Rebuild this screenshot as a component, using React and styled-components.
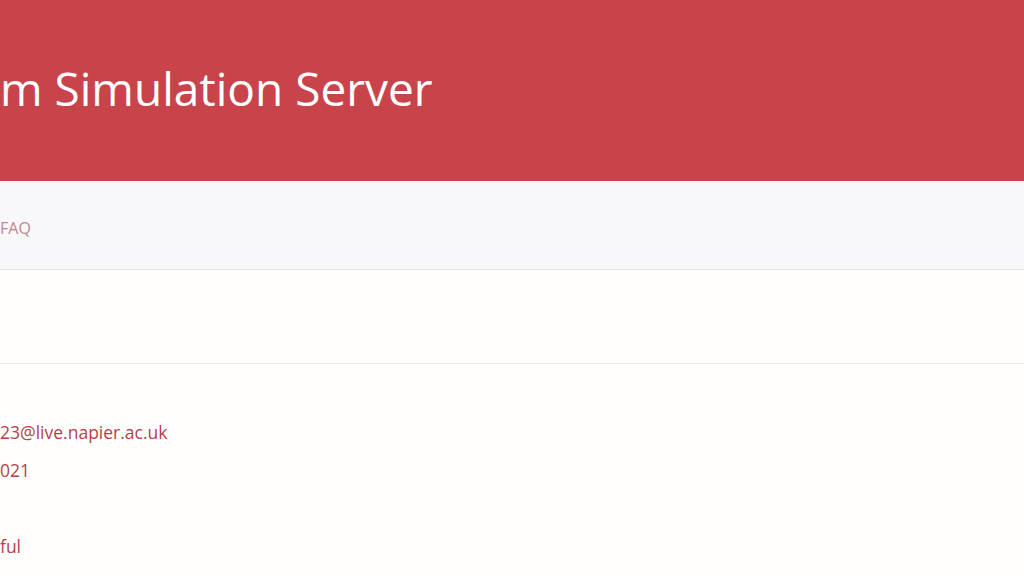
import React from 'react';
import styled, { createGlobalStyle } from 'styled-components';

const GlobalStyle = createGlobalStyle`
  html, body {
    margin: 0;
    padding: 0;
    background: #fffefd;
    overflow: hidden;
  }
  body {
    font-family: "Open Sans", "Noto Sans", sans-serif;
  }
`;

const Page = styled.div`
  width: 1024px;
  height: 576px;
  display: flex;
  flex-direction: column;
  background: #fffefd;
`;

const Header = styled.header`
  box-sizing: border-box;
  height: 181px;
  padding-top: 61px;
  background: #c9434b;
`;

const Title = styled.h1`
  margin: 0;
  font-size: 46px;
  line-height: 55px;
  font-weight: 400;
  color: #ffffff;
  white-space: nowrap;
`;

const Nav = styled.nav`
  box-sizing: border-box;
  height: 89px;
  padding-top: 35px;
  background: #f8f8fa;
  border-bottom: 1px solid #e6e1e1;
  display: flex;
  gap: 24px;
`;

const NavLink = styled.a`
  font-size: 16px;
  line-height: 24px;
  color: #be8a8f;
  text-decoration: none;
`;

const Blank = styled.section`
  height: 93px;
  border-bottom: 1px solid #ece4e8;
`;

const Details = styled.dl`
  margin: 0;
  padding-top: 49px;
  display: flex;
  flex-direction: column;
`;

const Value = styled.dd`
  margin: 0;
  height: 38px;
  font-size: 17.5px;
  line-height: 38px;
  color: ${(p) => (p.$muted ? '#c07c82' : '#b3414b')};
  white-space: nowrap;
`;

const rows = ['23@live.napier.ac.uk', '021', '', 'ful'];

export default function App() {
  return (
    <Page>
      <GlobalStyle />
      <Header>
        <Title>m Simulation Server</Title>
      </Header>
      <Nav>
        <NavLink href="#">FAQ</NavLink>
      </Nav>
      <Blank />
      <Details>
        {rows.map((r, i) => (
          <Value key={i}>{r}</Value>
        ))}
      </Details>
    </Page>
  );
}
